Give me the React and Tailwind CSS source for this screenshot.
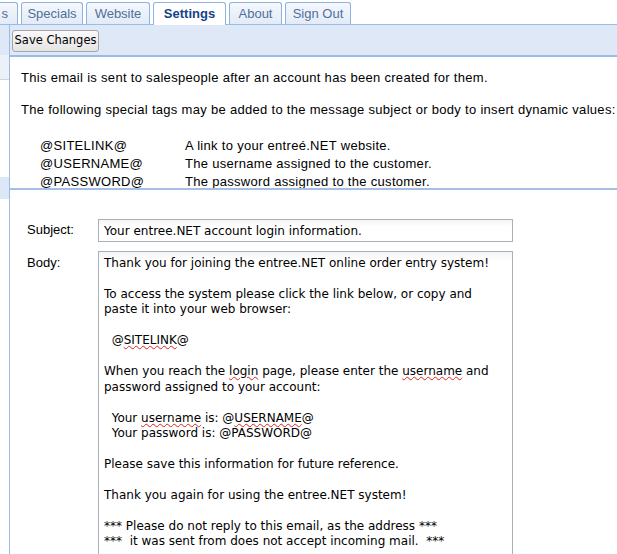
import React from 'react';

const tabs = [
  { label: 's', w: 'w-[18px]', partial: true },
  { label: 'Specials', w: 'w-[62px]' },
  { label: 'Website', w: 'w-[64px]' },
  { label: 'Settings', w: 'w-[73px]', active: true },
  { label: 'About', w: 'w-[53px]' },
  { label: 'Sign Out', w: 'w-[66px]' },
];

const tags = [
  ['@SITELINK@', 'A link to your entreé.NET website.'],
  ['@USERNAME@', 'The username assigned to the customer.'],
  ['@PASSWORD@', 'The password assigned to the customer.'],
];

const Sq = ({ children }) => (
  <span className="underline decoration-wavy decoration-[#e02020] decoration-1 underline-offset-1">{children}</span>
);

const App = () => {
  return (
    <div className="w-[617px] h-[554px] overflow-hidden bg-white text-black font-['Liberation_Sans',Arial,sans-serif]">
      {/* Tab strip */}
      <div className="h-[25px] flex items-end gap-[3px] border-b border-[#99bbe8]">
        {tabs.map((t) => (
          <div
            key={t.label}
            className={
              t.active
                ? `${t.w} h-[23px] -mb-px flex items-center justify-center bg-white border border-b-0 border-[#8db2e3] rounded-t-[3px] text-[13px] font-bold text-[#15428b]`
                : t.partial
                ? `${t.w} h-[22px] flex items-center justify-end pr-[9px] bg-gradient-to-b from-[#f5f8fc] to-[#e3ebf6] border border-l-0 border-b-0 border-[#8db2e3] rounded-tr-[3px] text-[13px] text-[#4f6f9d]`
                : `${t.w} h-[22px] flex items-center justify-center bg-gradient-to-b from-[#f5f8fc] to-[#e3ebf6] border border-b-0 border-[#8db2e3] rounded-t-[3px] text-[13px] text-[#4f6f9d]`
            }
          >
            {t.label}
          </div>
        ))}
      </div>

      <div className="flex">
        {/* Left sidebar strip */}
        <div className="w-[10px] shrink-0 h-[530px] border-r border-[#99bbe8] flex flex-col">
          <div className="h-[30px] bg-[#dfe8f6]" />
          <div className="h-[25px] bg-[#edf1f7] border-b border-[#c8d5e8]" />
          <div className="h-[97px]" />
          <div className="h-[22px] bg-[#dde8f7]" />
        </div>

        {/* Main area */}
        <div className="flex-1">
          {/* Toolbar */}
          <div className="h-[32px] bg-[#dfe8f6] border-b-2 border-[#99bbe8] flex items-center pl-[2px] pt-[2px]">
            <button className="h-[22px] w-[87px] rounded-[3px] border border-[#a6a6a6] bg-gradient-to-b from-[#fafafa] to-[#e4e4e4] text-[11.5px] font-['DejaVu_Sans',sans-serif] text-black">
              Save Changes
            </button>
          </div>

          {/* Info panel */}
          <div className="h-[133px] overflow-hidden border-b-2 border-[#a3bfe6] pl-[11px] pt-[12px] text-[13px] leading-[18px] tracking-[0.3px]">
            <p>This email is sent to salespeople after an account has been created for them.</p>
            <p className="mt-[14px]">The following special tags may be added to the message subject or body to insert dynamic values:</p>
            <div className="mt-[18px] pl-[19px]">
              {tags.map(([tag, desc]) => (
                <div key={tag} className="flex">
                  <div className="w-[145px]">{tag}</div>
                  <div>{desc}</div>
                </div>
              ))}
            </div>
          </div>

          {/* Form */}
          <div className="pt-[29px] pl-[17px]">
            <div className="flex items-start">
              <div className="w-[71px] text-[13px] pt-[1px]">Subject:</div>
              <div className="w-[415px] h-[23px] border border-[#a9b0b8] bg-gradient-to-b from-[#f4f4f4] to-white to-[30%] pl-[5px] flex items-center text-[12px] font-['DejaVu_Sans',sans-serif]">
                Your entree.NET account login information.
              </div>
            </div>
            <div className="flex items-start mt-[9px]">
              <div className="w-[71px] text-[13px] pt-[2px]">Body:</div>
              <div className="w-[415px] h-[320px] border border-[#a9b0b8] bg-gradient-to-b from-[#f4f4f4] to-white to-[3%] pl-[5px] pr-[8px] pt-[4px] text-[12px] leading-[15.45px] font-['DejaVu_Sans',sans-serif] whitespace-pre-wrap">
                {'Thank you for joining the entree.NET online order entry system!\n\nTo access the system please click the link below, or copy and paste it into your web browser:\n\n  @'}
                <Sq>SITELINK</Sq>
                {'@\n\nWhen you reach the '}
                <Sq>login</Sq>
                {' page, please enter the '}
                <Sq>username</Sq>
                {' and password assigned to your account:\n\n  Your '}
                <Sq>username</Sq>
                {' is: @'}
                <Sq>USERNAME</Sq>
                {'@\n  Your password is: @PASSWORD@\n\nPlease save this information for future reference.\n\nThank you again for using the entree.NET system!\n\n*** Please do not reply to this email, as the address ***\n***  it was sent from does not accept incoming mail.  ***'}
              </div>
            </div>
          </div>
        </div>
      </div>
    </div>
  );
};

export default App;
